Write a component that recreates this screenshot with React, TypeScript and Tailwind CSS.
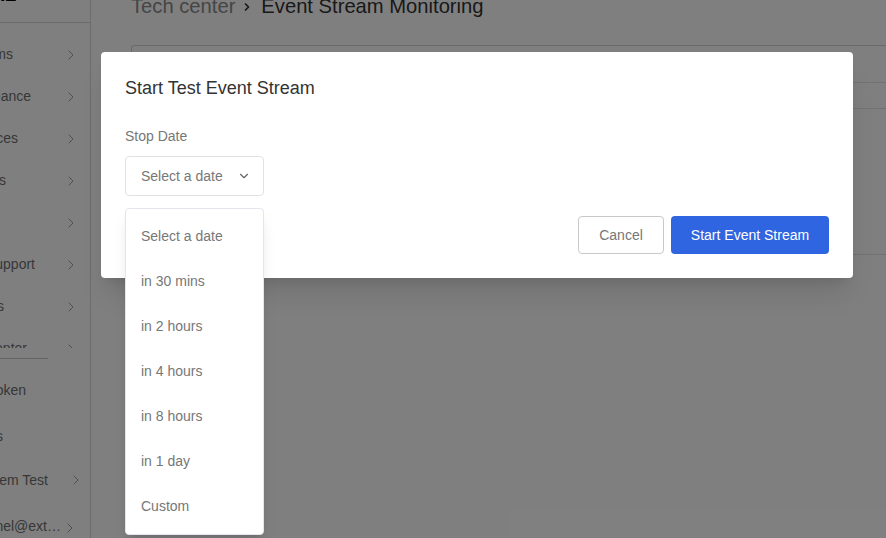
import { ChevronDown, ChevronRight } from 'lucide-react';

const font = { fontFamily: '"Liberation Sans", Arial, sans-serif' };

const navItems = [
  { label: 'Programs', width: 'w-[13px]' },
  { label: 'Compliance', width: 'w-[31px]' },
  { label: 'Services', width: 'w-[18px]' },
  { label: 'Tools', width: 'w-[6px]' },
  { label: '', width: 'w-[6px]' },
  { label: 'Tech Support', width: 'w-[35px]' },
  { label: 'Docs', width: 'w-[4px]' },
  { label: 'Tech center', width: 'w-[27px]' },
];

const dateOptions = ['Select a date', 'in 30 mins', 'in 2 hours', 'in 4 hours', 'in 8 hours', 'in 1 day', 'Custom'];

const Sidebar = () => (
  <aside className="w-[91px] h-full shrink-0 flex flex-col border-r border-[#d8d8d8] text-[14px] text-[#6f6f6f]">
    <div className="h-[23px] shrink-0 flex justify-start border-b border-[#d8d8d8] overflow-hidden">
      <span className="-mt-[16px] -ml-[9px] text-[19px] leading-[22px] font-bold text-black">AL</span>
    </div>

    <div className="h-[325px] shrink-0 pt-[10px] overflow-hidden">
      {navItems.map((item) => (
        <div key={item.label || 'blank'} className="h-[42px] grid grid-cols-[63px_16px] items-center">
          <div className={`${item.width} flex justify-end overflow-hidden whitespace-nowrap`}>{item.label}</div>
          <ChevronRight size={16} strokeWidth={1.1} className="mt-px text-[#777]" />
        </div>
      ))}
    </div>

    <div className="w-[48px] h-px shrink-0 mt-[10px] bg-[#c9c9c9]" />

    <div className="h-[42px] shrink-0 mt-[10px] flex items-center">
      <div className="w-[26px] flex justify-end overflow-hidden whitespace-nowrap">API Token</div>
    </div>
    <div className="h-[42px] shrink-0 mt-[4px] flex items-center">
      <div className="w-[3px] flex justify-end overflow-hidden whitespace-nowrap">Docs</div>
    </div>
    <div className="h-[42px] shrink-0 mt-[2px] flex items-center">
      <div className="w-[48px] flex justify-end overflow-hidden whitespace-nowrap">System Test</div>
      <ChevronRight size={16} strokeWidth={1.1} className="ml-[20px] text-[#777]" />
    </div>
    <div className="h-[24px] shrink-0 mt-[13px] flex items-center">
      <div className="w-[61px] flex justify-end overflow-hidden whitespace-nowrap">channel@ext…</div>
      <ChevronRight size={16} strokeWidth={1.1} className="ml-px mt-[3px] text-[#777]" />
    </div>
  </aside>
);

const Content = () => (
  <main className="flex-1 min-w-0 h-full pl-[40px] overflow-hidden">
    <div className="-mt-[5px] h-[23px] flex items-center text-[20.2px] leading-[23px] whitespace-nowrap">
      <span className="text-[#8a8a8a]">Tech center</span>
      <ChevronRight size={12} strokeWidth={3.5} className="ml-[6px] mr-[6px] text-[#333]" />
      <span className="ml-[2px] text-[#333]">Event Stream Monitoring</span>
    </div>
    <div className="mt-[27px] h-[210px] rounded-tl-[4px] border-t border-l border-[#d4d4d4]">
      <div className="h-[37px] border-b border-[#e4e4e4]" />
      <div className="h-[26px] border-b border-[#e4e4e4]" />
      <div className="h-[146px] border-b border-[#e4e4e4]" />
    </div>
  </main>
);

const StartStreamModal = () => (
  <div className="absolute left-[101px] top-[52px] w-[752px] h-[226px] rounded-[4px] bg-white px-6 pt-6 shadow-xl">
    <h2 className="h-[24px] text-[18px] leading-[24px] font-normal text-[#333]">Start Test Event Stream</h2>

    <div className="mt-[26px] text-[14px] leading-[20px] text-[#777]">Stop Date</div>

    <div className="relative mt-[10px] w-[139px]">
      <div className="h-[40px] flex items-center justify-between pl-[15px] pr-[12px] rounded-[4px] border border-[#e1e2e6] text-[14px] text-[#777]">
        <span>Select a date</span>
        <ChevronDown size={14} strokeWidth={2} className="text-[#666]" />
      </div>

      <ul className="absolute left-0 top-[52px] w-[139px] h-[327px] py-[5px] rounded-[4px] border border-[#e3e6ee] bg-white shadow-lg">
        {dateOptions.map((option) => (
          <li key={option} className="h-[45px] flex items-center pl-[15px] text-[14px] text-[#777]">
            {option}
          </li>
        ))}
      </ul>
    </div>

    <div className="mt-5 flex justify-end gap-[7px]">
      <button className="w-[86px] h-[38px] rounded-[4px] border border-[#c8c8c8] bg-white text-[14px] text-[#777]">
        Cancel
      </button>
      <button className="w-[158px] h-[38px] rounded-[4px] bg-[#2f65e0] text-[14px] text-white">
        Start Event Stream
      </button>
    </div>
  </div>
);

const App = () => {
  return (
    <div className="relative w-[886px] h-[538px] overflow-hidden bg-white" style={font}>
      <div className="h-full flex">
        <Sidebar />
        <Content />
      </div>
      <div className="absolute inset-0 bg-black/50" />
      <StartStreamModal />
    </div>
  );
};

export default App;
